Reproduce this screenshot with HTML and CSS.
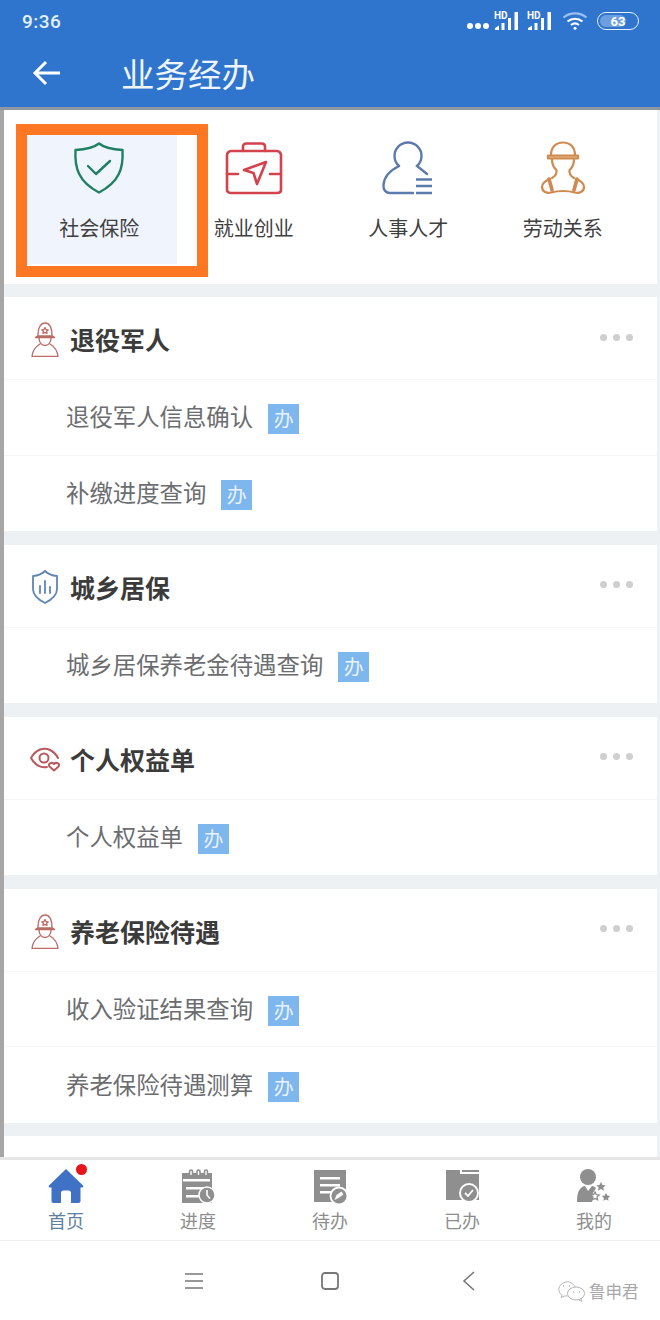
FILE: index.html
```html
<!DOCTYPE html>
<html lang="zh-CN">
  <head>
    <meta charset="UTF-8" />
    <meta name="viewport" content="width=device-width, initial-scale=1.0" />
    <title>业务经办</title>
    <link rel="stylesheet" href="styles.css">
  </head>
  <body>
    <div class="phone">
      <!-- 顶部蓝色区域 -->
      <div class="header">
        <div class="statusbar">
          <span class="time">9:36</span>
          <div class="statusIcons">
            <span class="moreDots"><i></i><i></i><i></i></span>
            <svg class="signal" width="26" height="20" viewBox="0 0 26 20">
              <text x="0" y="7.500" class="hd">HD</text>
              <path d="M1 19v-2l4-2.500V19zM7.500 19v-7h3v7zM14 19V7h3v12zM20.500 19V1h3.500v18z" fill="#fff" />
            </svg>
            <svg class="signal" width="26" height="20" viewBox="0 0 26 20">
              <text x="0" y="7.500" class="hd">HD</text>
              <path d="M1 19v-2l4-2.500V19zM7.500 19v-7h3v7zM14 19V7h3v12zM20.500 19V1h3.500v18z" fill="#fff" />
            </svg>
            <svg class="wifi" width="26" height="20" viewBox="0 0 26 20" fill="none" stroke="#fff" stroke-width="2.200">
              <path d="M1.500 6.500C8 1 18 1 24.500 6.500" stroke="#9cc0ee" />
              <path d="M5.500 10.500c4.500-3.700 10.500-3.700 15 0" />
              <path d="M9 14c2.500-2 5.500-2 8 0" />
              <circle cx="13" cy="17.300" r="1.500" fill="#fff" stroke="none" />
            </svg>
            <div class="battery"><span class="batteryFill"></span><span class="batteryNum">63</span></div>
          </div>
        </div>
        <div class="titlebar">
          <svg class="backArrow" width="30" height="26" viewBox="0 0 30 26" fill="none" stroke="#fff" stroke-width="3">
            <path d="M28 13H3M14 2 3 13l11 11" />
          </svg>
          <h1 class="pageTitle">业务经办</h1>
        </div>
      </div>

      <div class="content">
        <!-- 四个大类 -->
        <div class="tiles">
          <div class="tile tileActive">
            <svg width="54" height="54" viewBox="0 0 54 54" fill="none" stroke="#1f8063" stroke-width="2.400" stroke-linejoin="round" stroke-linecap="round">
              <path d="M27 2.500c5 4 13 6 23.500 6.500 1 18-3 32-23.500 42.500C6.500 41 2.500 27 3.500 9 14 8.500 22 6.500 27 2.500z" />
              <path d="M16 25l8 8 14-13" />
            </svg>
            <span class="tileName">社会保险</span>
          </div>
          <div class="tile">
            <svg width="60" height="54" viewBox="0 0 60 54" fill="none" stroke="#d2434e" stroke-width="2.600" stroke-linejoin="round" stroke-linecap="round">
              <path d="M19 10V5.500C19 3.500 20.500 2.500 22.500 2.500h15c2 0 3.500 1 3.500 3V10" />
              <path d="M7 10h46c2 0 4 2 4 4v35c0 2-2 3-4 3H7c-2 0-4-1-4-3V14c0-2 2-4 4-4z" />
              <path d="M3 33h11M46 33h11" />
              <path d="M20 29l22-8-9 22-3.500-11z" />
            </svg>
            <span class="tileName">就业创业</span>
          </div>
          <div class="tile">
            <svg width="54" height="54" viewBox="0 0 54 54" fill="none" stroke="#5a7bab" stroke-width="2.400" stroke-linecap="round">
              <path d="M18 25A13.500 13.500 0 1 1 36 25L46 33" />
              <path d="M18 25C10 29 3 35 2.500 44 2 49 5 52 9 52H32" />
              <path d="M35 38.500h16M35 45h16M35 52h16" stroke-linecap="butt" />
            </svg>
            <span class="tileName">人事人才</span>
          </div>
          <div class="tile">
            <svg width="46" height="54" viewBox="0 0 46 54" fill="none" stroke="#d08a4f" stroke-width="2.200" stroke-linejoin="round" stroke-linecap="round">
              <path d="M11 14C11 6 16 1.500 23 1.500S35 6 35 14" />
              <path d="M8 14.500h30v3H8z" fill="#eab98d" />
              <path d="M12 18c0 6 2 9 4.500 11 .5 3-1 6-4.500 8M34 18c0 6-2 9-4.500 11-.5 3 1 6 4.500 8" />
              <path d="M10 38c-5 2-8 5-8 8 0 5 5 6.500 9 5.500 8-2 16-2 24 0 4 1 9-.5 9-5.500 0-3-3-6-8-8" />
              <path d="M9 38l3 11M37 38l-3 11" stroke-width="3.600" />
            </svg>
            <span class="tileName">劳动关系</span>
          </div>
        </div>

        <div class="section">
          <div class="sectionHead">
            <svg class="sectionIcon" width="28" height="36" viewBox="0 0 28 36" fill="none" stroke="#bb6b67" stroke-width="1.300" stroke-linejoin="round" stroke-linecap="round">
              <path d="M7 15C7 6 10 2 14 2s7 4 7 13" />
              <path d="M4.500 16.500c1-1 2-1.500 2.500-1.500h14c.5 0 1.500.5 2.500 1.500z" />
              <path d="M8 17c0 5 3 7.500 6 7.500s6-2.500 6-7.500" />
              <path d="M14 6.500l1 2 2.200.3-1.600 1.500.4 2.200-2-1.100-2 1.100.4-2.200-1.600-1.500 2.200-.3z" />
              <path d="M9 23C4 26 1.500 30 1 35.500h26C26.500 30 24 26 19 23" />
            </svg>
            <h2 class="sectionTitle">退役军人</h2>
            <span class="sectionMore"><i></i><i></i><i></i></span>
          </div>
          <div class="row"><span class="rowName">退役军人信息确认</span><span class="badge">办</span></div>
          <div class="row"><span class="rowName">补缴进度查询</span><span class="badge">办</span></div>
        </div>

        <div class="section">
          <div class="sectionHead">
            <svg class="sectionIcon" width="28" height="36" viewBox="0 0 28 36" fill="none" stroke="#5f85b4" stroke-width="1.800" stroke-linejoin="round" stroke-linecap="round">
              <path d="M14 2c3 3 7 4.500 12 5v13c0 6-5 10.500-12 14C7 30.500 2 26 2 20V7c5-.5 9-2 12-5z" />
              <path d="M9 17v7M14 12v12M19 18v6" />
            </svg>
            <h2 class="sectionTitle">城乡居保</h2>
            <span class="sectionMore"><i></i><i></i><i></i></span>
          </div>
          <div class="row"><span class="rowName">城乡居保养老金待遇查询</span><span class="badge">办</span></div>
        </div>

        <div class="section">
          <div class="sectionHead">
            <svg class="sectionIcon" width="30" height="26" viewBox="0 0 30 26" fill="none" stroke="#b95a5e" stroke-width="2" stroke-linejoin="round" stroke-linecap="round">
              <path d="M17 21c-6 1-12-2-16-9C6 3 14 1 20 4c3 1.500 6 4 8 8" />
              <circle cx="14" cy="12" r="4.500" />
              <path d="M24 24.500l-4.500-4c-2-2.500 2-5 4.500-2.500 2.500-2.500 6.500 0 4.500 2.500z" />
            </svg>
            <h2 class="sectionTitle">个人权益单</h2>
            <span class="sectionMore"><i></i><i></i><i></i></span>
          </div>
          <div class="row"><span class="rowName">个人权益单</span><span class="badge">办</span></div>
        </div>

        <div class="section">
          <div class="sectionHead">
            <svg class="sectionIcon" width="28" height="36" viewBox="0 0 28 36" fill="none" stroke="#bb6b67" stroke-width="1.300" stroke-linejoin="round" stroke-linecap="round">
              <path d="M7 15C7 6 10 2 14 2s7 4 7 13" />
              <path d="M4.500 16.500c1-1 2-1.500 2.500-1.500h14c.5 0 1.500.5 2.500 1.500z" />
              <path d="M8 17c0 5 3 7.500 6 7.500s6-2.500 6-7.500" />
              <path d="M14 6.500l1 2 2.200.3-1.600 1.500.4 2.200-2-1.100-2 1.100.4-2.200-1.600-1.500 2.200-.3z" />
              <path d="M9 23C4 26 1.500 30 1 35.500h26C26.500 30 24 26 19 23" />
            </svg>
            <h2 class="sectionTitle">养老保险待遇</h2>
            <span class="sectionMore"><i></i><i></i><i></i></span>
          </div>
          <div class="row"><span class="rowName">收入验证结果查询</span><span class="badge">办</span></div>
          <div class="row"><span class="rowName">养老保险待遇测算</span><span class="badge">办</span></div>
        </div>

        <div class="sectionCut"></div>

        <!-- 橙色标注框 -->
        <div class="markBox"></div>
      </div>

      <!-- 底部菜单 -->
      <div class="tabbar">
        <div class="tab tabActive">
          <svg width="36" height="36" viewBox="0 0 36 36">
            <path d="M18 1 35 17.500c.8 1 .2 2-1 2h-1.500V33c0 1-.8 2-2 2H23V25c0-1.500-1-2.500-2.500-2.500h-5C14 22.500 13 23.500 13 25v10H5.500c-1.200 0-2-1-2-2V19.500H2c-1.200 0-1.800-1-1-2z" fill="#3f72c4" />
          </svg>
          <span class="redDot"></span>
          <span class="tabName">首页</span>
        </div>
        <div class="tab">
          <svg width="36" height="36" viewBox="0 0 36 36">
            <path d="M2 5h30v30H2z" fill="#8f8f8f" />
            <path d="M3 11h27v2.500H3zM6 19h22v2.500H6zM6 27h16v2.500H6z" fill="#fff" />
            <path d="M9.500 7V3.500a1.500 1.500 0 0 1 3 0V7M17 7V3.500a1.500 1.500 0 0 1 3 0V7M24.500 7V3.500a1.500 1.500 0 0 1 3 0V7" stroke="#8f8f8f" stroke-width="1.600" fill="#fff" />
            <circle cx="27" cy="27" r="8" fill="#8f8f8f" stroke="#fff" stroke-width="1.500" />
            <path d="M27 22v5l3 3.500" stroke="#fff" stroke-width="1.600" fill="none" />
          </svg>
          <span class="tabName">进度</span>
        </div>
        <div class="tab">
          <svg width="36" height="36" viewBox="0 0 36 36">
            <path d="M2 2h32v32H2z" fill="#8f8f8f" />
            <path d="M8 9h20v2.500H8zM8 16h20v2.500H8zM8 23h11v2.500H8z" fill="#fff" />
            <circle cx="27" cy="28" r="8.500" fill="#8f8f8f" stroke="#fff" stroke-width="1.800" />
            <path d="M22.500 32l2-5 5-3.500 2 3-5 3.500z" fill="#fff" />
          </svg>
          <span class="tabName">待办</span>
        </div>
        <div class="tab">
          <svg width="36" height="36" viewBox="0 0 36 36">
            <path d="M2 2h14v4h19v26H2z" fill="#8f8f8f" />
            <path d="M18 2h17v2H18z" fill="#8f8f8f" />
            <circle cx="25" cy="25" r="9" fill="#8f8f8f" stroke="#fff" stroke-width="2" />
            <path d="M21 25l3 3 5-6" stroke="#fff" stroke-width="1.800" fill="none" />
          </svg>
          <span class="tabName">已办</span>
        </div>
        <div class="tab">
          <svg width="36" height="36" viewBox="0 0 36 36" fill="#8f8f8f">
            <circle cx="12" cy="9" r="8" />
            <path d="M1 34c0-9 2-15 8-16l3 5 4-5c1.500.3 3 1 4 2l-3 5-1 9z" />
            <path d="M25 14l1.500 3 3.200.3-2.400 2.200.7 3.200-3-1.700-3 1.700.7-3.200-2.400-2.200 3.200-.3zM30 25l1.300 2.600 2.900.3-2.100 2 .5 2.900-2.600-1.400-2.600 1.400.5-2.900-2.100-2 2.900-.3z" />
            <path d="M19 24l1.300 2.600 2.900.3-2.100 2 .5 2.900-2.600-1.400-2.600 1.400.5-2.900-2.100-2 2.900-.3z" fill="#fff" stroke="#8f8f8f" stroke-width="1.300" />
          </svg>
          <span class="tabName">我的</span>
        </div>
      </div>

      <!-- 手机导航键 -->
      <div class="navkeys">
        <svg width="20" height="18" viewBox="0 0 20 18" stroke="#777" stroke-width="1.600">
          <path d="M1 2h18M1 9h18M1 16h18" />
        </svg>
        <svg width="20" height="20" viewBox="0 0 20 20" fill="none" stroke="#777" stroke-width="1.800">
          <rect x="2" y="2" width="16" height="16" rx="3" />
        </svg>
        <svg class="navBack" width="14" height="20" viewBox="0 0 14 20" fill="none" stroke="#777" stroke-width="1.600">
          <path d="M12 1 2 10l10 9" />
        </svg>
      </div>

      <!-- 公众号水印 -->
      <div class="watermark">
        <svg width="28" height="22" viewBox="0 0 28 22" fill="none" stroke="#b5b5b5" stroke-width="1">
          <path d="M17 7C15 3 11 1 8 2 3 3 0 7 1 11c.5 2 2 3.500 3 4l-.5 2.500 3-1.500h3" />
          <ellipse cx="18" cy="13.500" rx="8.500" ry="6.500" />
          <path d="M23 19l1 2.500-3-1.500" />
          <path d="M5 6h1M11 6h1M15 12h1M21 12h1" stroke-width="1.500" />
        </svg>
        <span>鲁申君</span>
      </div>
    </div>
  </body>
</html>
```

FILE: styles.css
```css
* {
  box-sizing: border-box;
}
body {
  margin: 0;
  background: #fff;
  font-family: "Noto Sans CJK SC", "Liberation Sans", sans-serif;
}
h1,
h2 {
  margin: 0;
  font-weight: normal;
}
i {
  display: block;
}
.phone {
  position: relative;
  width: 660px;
  height: 1320px;
  overflow: hidden;
  background: #fff;
}

/* header */
.header {
  height: 110px;
  background: #2f74cd;
  border-bottom: 3px solid #8e969f;
  color: #fff;
}
.statusbar {
  height: 42px;
  padding: 0 21px 0 22px;
  display: flex;
  align-items: center;
  justify-content: space-between;
}
.time {
  font-family: Roboto, sans-serif;
  font-size: 19px;
  font-weight: 500;
  letter-spacing: 0.5px;
  color: #e6f0fb;
}
.statusIcons {
  display: flex;
  align-items: center;
}
.moreDots {
  display: flex;
  gap: 2px;
  margin: 9px 5px 0 0;
}
.moreDots i {
  width: 6px;
  height: 6px;
  border-radius: 50%;
  background: #fff;
}
.signal {
  margin-right: 7px;
}
.hd {
  font-family: Roboto, sans-serif;
  font-size: 10px;
  font-weight: 700;
  fill: #fff;
}
.wifi {
  margin: 0 9px 0 2px;
}
.battery {
  position: relative;
  width: 42px;
  height: 18px;
  border: 1.5px solid #e6f0fb;
  border-radius: 9px;
  overflow: hidden;
  display: flex;
  align-items: center;
  justify-content: center;
}
.batteryFill {
  position: absolute;
  left: 2px;
  top: 2px;
  bottom: 2px;
  width: 26px;
  border-radius: 6px;
  background: #6d9fe0;
}
.batteryNum {
  position: relative;
  font-family: Roboto, sans-serif;
  font-size: 13px;
  font-weight: 700;
  color: #fff;
}
.titlebar {
  height: 62px;
  padding-left: 32px;
  display: flex;
  align-items: center;
}
.backArrow {
  margin-right: 59px;
}
.pageTitle {
  font-size: 33.500px;
  line-height: 40px;
  color: #eef5fc;
}

/* content */
.content {
  height: 1047px;
  padding: 0 3px 0 4px;
  background: #eef1f4;
  box-shadow: inset 4px 0 0 #a6a6a6;
}
.tiles {
  height: 173.500px;
  padding: 14px 0 0 18px;
  background: #fff;
  display: grid;
  grid-template-columns: repeat(4, 154.500px);
}
.tile {
  height: 140px;
  display: flex;
  flex-direction: column;
  align-items: center;
  padding-top: 17px;
}
.tile svg {
  height: 54px;
  flex: none;
}
.tileActive {
  background: #f0f4fd;
}
.tileName {
  margin-top: 19px;
  font-size: 20px;
  line-height: 28px;
  color: #3f3f3f;
}
.section {
  margin-top: 13.500px;
  background: #fff;
}
.sectionHead {
  height: 83px;
  padding: 2px 24px 0 26px;
  display: flex;
  align-items: center;
  border-bottom: 1px solid #f6f6f6;
}
.sectionIcon {
  width: 30px;
  margin-right: 10px;
  flex: none;
}
.sectionTitle {
  flex: 1;
  font-size: 25px;
  font-weight: 700;
  line-height: 34px;
  color: #3b3b3b;
}
.sectionMore {
  display: flex;
  gap: 6px;
  margin-bottom: 4px;
}
.sectionMore i {
  width: 7px;
  height: 7px;
  border-radius: 50%;
  background: #cfcfcf;
}
.row {
  height: 75.500px;
  padding-left: 62px;
  display: flex;
  align-items: center;
  border-bottom: 1px solid #f6f6f6;
}
.row:last-child {
  border-bottom: 0;
}
.rowName {
  margin-bottom: 2px;
  font-size: 23.400px;
  line-height: 32px;
  color: #6b6d70;
}
.badge {
  width: 31px;
  height: 30px;
  margin: 4px 0 0 15px;
  background: #7eb6ee;
  color: #e8f2fc;
  font-size: 20px;
  line-height: 30px;
  text-align: center;
}
.sectionCut {
  height: 21px;
  margin-top: 13.500px;
  background: #fff;
}
.markBox {
  position: absolute;
  left: 16px;
  top: 124px;
  width: 192px;
  height: 153px;
  border: 11px solid #ff7722;
}

/* tabbar */
.tabbar {
  height: 84px;
  border-top: 3px solid #e6e6e6;
  border-bottom: 1px solid #f0f0f0;
  display: grid;
  grid-template-columns: repeat(5, 132px);
  background: #fff;
}
.tab {
  position: relative;
  display: flex;
  flex-direction: column;
  align-items: center;
  padding-top: 8px;
}
.tab svg {
  flex: none;
}
.tabName {
  margin-top: 3px;
  font-size: 18px;
  line-height: 26px;
  color: #8d8d8d;
}
.tabActive .tabName {
  color: #5d80a0;
}
.redDot {
  position: absolute;
  left: 76px;
  top: 4px;
  width: 11px;
  height: 11px;
  border-radius: 50%;
  background: #e8141c;
}

/* nav keys */
.navkeys {
  height: 79px;
  padding-left: 184px;
  display: flex;
  align-items: center;
  gap: 116px;
}
.navBack {
  margin-left: 6px;
}

.watermark {
  position: absolute;
  left: 558px;
  top: 1280px;
  display: flex;
  align-items: center;
  gap: 3px;
  font-size: 16.500px;
  line-height: 22px;
  color: #a8a8a8;
}
```
